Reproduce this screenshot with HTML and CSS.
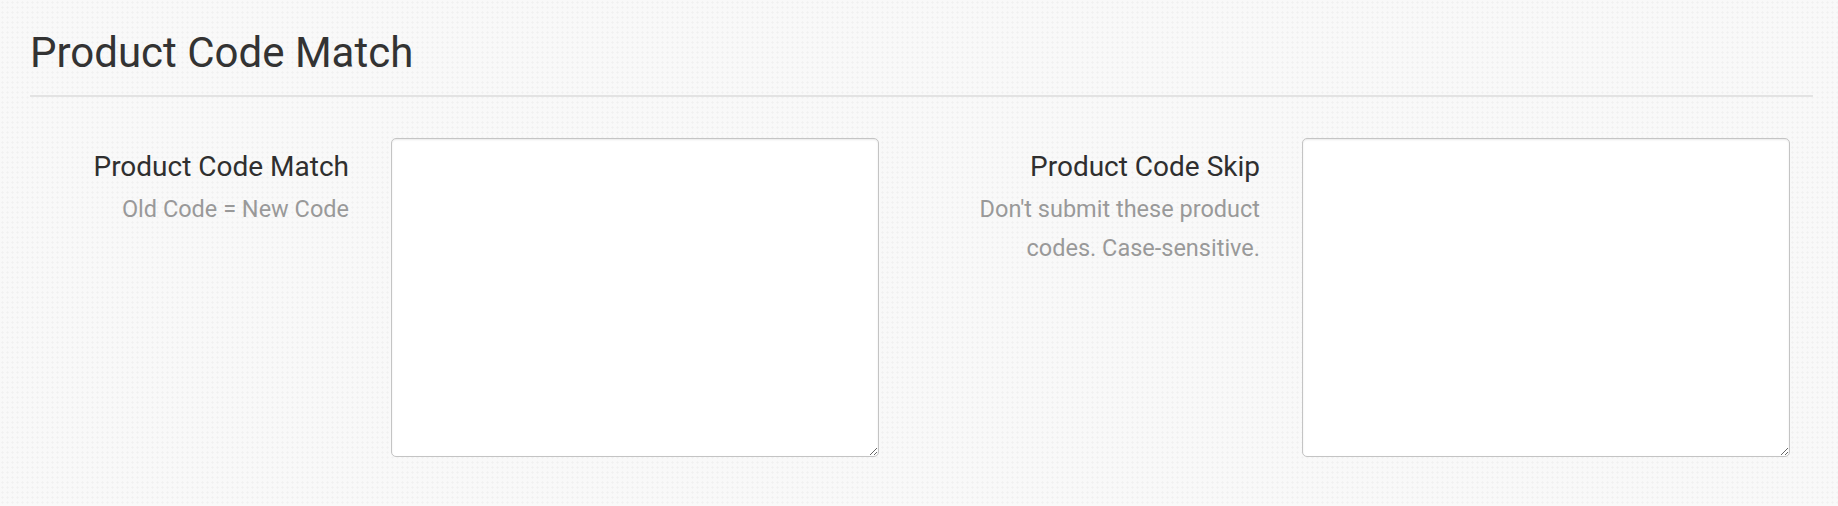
FILE: index.html
```html
<!DOCTYPE html>
<html lang="en">
<head>
<meta charset="utf-8">
<title>Product Code Match</title>
<link rel="stylesheet" href="styles.css">
</head>
<body>
<div class="page">
  <h2 class="section-title">Product Code Match</h2>
  <div class="fields">
    <div class="field">
      <div class="label-col">
        <label class="label" for="match">Product Code Match</label>
        <div class="help">Old Code = New Code</div>
      </div>
      <textarea id="match" class="input"></textarea>
    </div>
    <div class="field">
      <div class="label-col">
        <label class="label" for="skip">Product Code Skip</label>
        <div class="help">Don't submit these product codes. Case-sensitive.</div>
      </div>
      <textarea id="skip" class="input"></textarea>
    </div>
  </div>
</div>
</body>
</html>
```

FILE: styles.css
```css
html, body {
  margin: 0;
  padding: 0;
}
body {
  width: 1838px;
  height: 506px;
  background-color: #f9f9f9;
  background-image: radial-gradient(circle at 50% 50%, #f1f1f1 0.9px, rgba(241,241,241,0) 1.4px);
  background-size: 5px 5px;
  font-family: Roboto, "Noto Sans", "Liberation Sans", sans-serif;
  color: #333;
}
.page {
  padding: 28px 25px 0 30px;
}
.section-title {
  margin: 0;
  font-size: 42px;
  line-height: 50px;
  font-weight: 400;
  color: #333;
  padding-bottom: 17px;
  border-bottom: 2px solid #e3e3e3;
}
.fields {
  display: grid;
  grid-template-columns: 911px 1fr;
  margin-top: 41px;
}
.field {
  display: grid;
  grid-template-columns: 319px 488px;
  column-gap: 42px;
  align-items: start;
}
.label-col {
  text-align: right;
  padding-top: 9px;
}
.label {
  display: block;
  font-size: 28px;
  line-height: 40px;
  color: #2f2f2f;
}
.help {
  margin-top: 3px;
  font-size: 23.5px;
  line-height: 39px;
  color: #999;
}
.input {
  box-sizing: border-box;
  width: 488px;
  height: 319px;
  margin: 0;
  border: 1px solid #c4c4c4;
  border-radius: 5px;
  background: #fff;
  box-shadow: inset 0 1px 2px rgba(0,0,0,0.09);
  font-family: inherit;
  font-size: 16px;
}
```
